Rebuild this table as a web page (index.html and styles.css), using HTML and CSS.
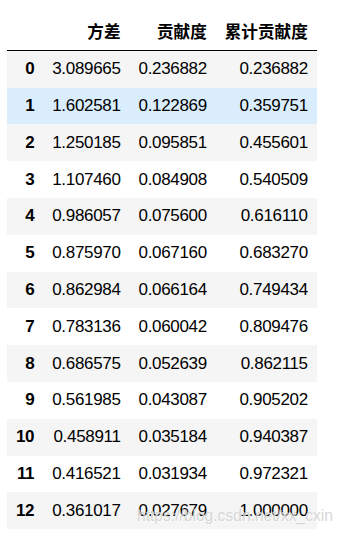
FILE: index.html
```html
<!DOCTYPE html>
<html>
<head>
<meta charset="utf-8">
<link rel="stylesheet" href="styles.css">
</head>
<body>
<div class="wrap">
<table class="df">
  <thead>
    <tr><th class="idx"></th><th>方差</th><th>贡献度</th><th>累计贡献度</th></tr>
  </thead>
  <tbody>
    <tr><th>0</th><td>3.089665</td><td>0.236882</td><td>0.236882</td></tr>
    <tr class="hover"><th>1</th><td>1.602581</td><td>0.122869</td><td>0.359751</td></tr>
    <tr><th>2</th><td>1.250185</td><td>0.095851</td><td>0.455601</td></tr>
    <tr><th>3</th><td>1.107460</td><td>0.084908</td><td>0.540509</td></tr>
    <tr><th>4</th><td>0.986057</td><td>0.075600</td><td>0.616110</td></tr>
    <tr><th>5</th><td>0.875970</td><td>0.067160</td><td>0.683270</td></tr>
    <tr><th>6</th><td>0.862984</td><td>0.066164</td><td>0.749434</td></tr>
    <tr><th>7</th><td>0.783136</td><td>0.060042</td><td>0.809476</td></tr>
    <tr><th>8</th><td>0.686575</td><td>0.052639</td><td>0.862115</td></tr>
    <tr><th>9</th><td>0.561985</td><td>0.043087</td><td>0.905202</td></tr>
    <tr><th>10</th><td>0.458911</td><td>0.035184</td><td>0.940387</td></tr>
    <tr><th>11</th><td>0.416521</td><td>0.031934</td><td>0.972321</td></tr>
    <tr><th>12</th><td>0.361017</td><td>0.027679</td><td>1.000000</td></tr>
  </tbody>
</table>
<div class="watermark">https://blog.csdn.net/xx_cxin</div>
</div>
</body>
</html>
```
FILE: styles.css
```css
html, body {
  margin: 0;
  padding: 0;
  background: #ffffff;
}
.wrap {
  position: relative;
  width: 342px;
  height: 534px;
  overflow: hidden;
  padding: 13px 0 0 7px;
  box-sizing: border-box;
}
.df {
  border-collapse: collapse;
  border-spacing: 0;
  font-family: "Liberation Sans", Arial, "Noto Sans CJK SC", sans-serif;
  font-size: 17px;
  color: #000;
}
.df th, .df td {
  padding: 8.5px 9px;
  line-height: 19.8px;
  height: 19.8px;
  text-align: right;
  vertical-align: middle;
  white-space: nowrap;
  border: none;
}
.df tbody th, .df tbody td {
  letter-spacing: -0.33px;
}
.df thead th {
  font-weight: bold;
  font-size: 16.6px;
  font-family: "Noto Sans CJK SC", sans-serif;
}
.df thead tr {
  border-bottom: 1px solid #000;
}
.df tbody th {
  font-weight: bold;
}
.df tbody tr:nth-child(odd) {
  background: #f5f5f5;
}
.df tbody tr.hover {
  background: #d9edfd;
}
.watermark {
  position: absolute;
  left: 137px;
  top: 507px;
  font-family: "Liberation Sans", Arial, sans-serif;
  font-size: 15.6px;
  color: rgba(210, 210, 210, 0.9);
  text-shadow: 1px 1px 0 rgba(255, 255, 255, 0.6);
  white-space: nowrap;
}
```
